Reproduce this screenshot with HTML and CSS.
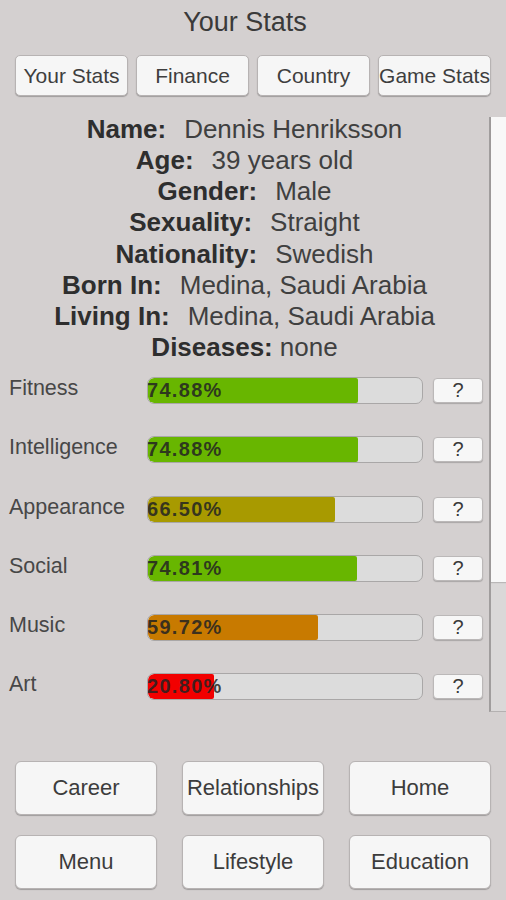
FILE: index.html
```html
<!DOCTYPE html>
<html>
<head>
<meta charset="utf-8">
<link rel="stylesheet" href="styles.css">
</head>
<body>
<div class="screen">
  <div class="title">Your Stats</div>
  <div class="tabs">
    <div class="tab">Your Stats</div>
    <div class="tab">Finance</div>
    <div class="tab">Country</div>
    <div class="tab">Game Stats</div>
  </div>
  <div class="panel">
    <div class="content">
      <div class="info">
        <div class="line"><b>Name:</b><span class="val">Dennis Henriksson</span></div>
        <div class="line"><b>Age:</b><span class="val">39 years old</span></div>
        <div class="line"><b>Gender:</b><span class="val">Male</span></div>
        <div class="line"><b>Sexuality:</b><span class="val">Straight</span></div>
        <div class="line"><b>Nationality:</b><span class="val">Swedish</span></div>
        <div class="line"><b>Born In:</b><span class="val">Medina, Saudi Arabia</span></div>
        <div class="line"><b>Living In:</b><span class="val">Medina, Saudi Arabia</span></div>
        <div class="line"><b>Diseases:</b><span class="val short">none</span></div>
      </div>
      <div class="stats">
        <div class="row">
          <div class="label">Fitness</div>
          <div class="bar"><div class="fill green" style="width:210px"></div><div class="pct">74.88%</div></div>
          <div class="q">?</div>
        </div>
        <div class="row">
          <div class="label">Intelligence</div>
          <div class="bar"><div class="fill green" style="width:210px"></div><div class="pct">74.88%</div></div>
          <div class="q">?</div>
        </div>
        <div class="row">
          <div class="label">Appearance</div>
          <div class="bar"><div class="fill olive" style="width:187px"></div><div class="pct">66.50%</div></div>
          <div class="q">?</div>
        </div>
        <div class="row">
          <div class="label">Social</div>
          <div class="bar"><div class="fill green" style="width:209px"></div><div class="pct">74.81%</div></div>
          <div class="q">?</div>
        </div>
        <div class="row">
          <div class="label">Music</div>
          <div class="bar"><div class="fill orange" style="width:170px"></div><div class="pct">59.72%</div></div>
          <div class="q">?</div>
        </div>
        <div class="row">
          <div class="label">Art</div>
          <div class="bar"><div class="fill red" style="width:66px"></div><div class="pct">20.80%</div></div>
          <div class="q">?</div>
        </div>
      </div>
    </div>
    <div class="scrollbar"><div class="thumb"></div></div>
  </div>
  <div class="actions">
    <div class="btn">Career</div>
    <div class="btn">Relationships</div>
    <div class="btn">Home</div>
    <div class="btn">Menu</div>
    <div class="btn">Lifestyle</div>
    <div class="btn">Education</div>
  </div>
</div>
</body>
</html>
```
FILE: styles.css
```css
html, body {
  margin: 0;
  padding: 0;
  background: #d4d0d0;
}
body {
  font-family: "Liberation Sans", Arial, sans-serif;
  color: #353535;
}
.screen {
  width: 506px;
  height: 900px;
  overflow: hidden;
}
.title {
  height: 44px;
  line-height: 44px;
  font-size: 27px;
  text-align: center;
  padding-right: 16px;
  color: #3a3a3a;
}
.tabs {
  display: grid;
  grid-template-columns: repeat(4, 113px);
  column-gap: 8px;
  margin: 11px 0 0 15px;
}
.tab {
  height: 39px;
  line-height: 39px;
  font-size: 21px;
  text-align: center;
  white-space: nowrap;
  overflow: hidden;
  background: #f6f6f6;
  border: 1px solid #b7b3b3;
  border-radius: 5px;
  box-shadow: 0 1px 1px rgba(0,0,0,0.25);
  color: #3e3e3e;
}
.panel {
  display: flex;
  margin-top: 17px;
  height: 599px;
}
.content {
  width: 489px;
}
.info {
  padding-top: 0.5px;
  text-align: center;
  font-size: 26px;
  line-height: 31.25px;
  padding-right: 0;
}
.line b {
  font-weight: bold;
  color: #2e2e2e;
}
.val {
  margin-left: 18px;
  color: #404040;
}
.val.short {
  margin-left: 7px;
}
.stats {
  margin-top: 13.5px;
  display: flex;
  flex-direction: column;
  gap: 32.3px;
}
.row {
  display: flex;
  align-items: flex-start;
  height: 27px;
}
.label {
  width: 138px;
  padding-left: 9px;
  font-size: 21.5px;
  line-height: 22px;
  color: #474747;
}
.bar {
  width: 274px;
  height: 25px;
  display: grid;
  background: #dcdcdc;
  border: 1px solid #a9a7a7;
  border-radius: 7px;
  overflow: hidden;
}
.fill, .pct {
  grid-area: 1 / 1;
}
.fill {
  height: 25px;
  border-radius: 6px 2px 2px 6px;
}
.green { background: #68b600; }
.olive { background: #a89a00; }
.orange { background: #c87a00; }
.red { background: #f20000; }
.pct {
  font-size: 20px;
  font-weight: bold;
  letter-spacing: 1.3px;
  line-height: 25px;
  color: rgba(35,35,35,0.85);
  margin-left: -1px;
}
.q {
  margin: 1px 0 0 10px;
  width: 48px;
  height: 23px;
  line-height: 23px;
  text-align: center;
  font-size: 20px;
  background: #f7f7f7;
  border: 1px solid #bbb8b8;
  border-radius: 4px;
  box-shadow: 0 1px 1px rgba(0,0,0,0.2);
  color: #3a3a3a;
}
.scrollbar {
  width: 15px;
  margin-top: 4px;
  height: 594px;
  background: #dad8d8;
  border-left: 2px solid #a09d9d;
  border-bottom: 1px solid #b4b1b1;
}
.thumb {
  height: 465px;
  background: #f8f8f8;
  box-shadow: 0 1px 1px rgba(0,0,0,0.15);
}
.actions {
  display: grid;
  grid-template-columns: repeat(3, 142px);
  grid-auto-rows: 54px;
  column-gap: 25px;
  row-gap: 20px;
  margin: 49px 0 0 15px;
}
.btn {
  display: flex;
  align-items: center;
  justify-content: center;
  font-size: 22px;
  white-space: nowrap;
  background: #f6f6f6;
  border: 1px solid #b7b3b3;
  border-radius: 6px;
  box-shadow: 0 1px 1px rgba(0,0,0,0.25);
  color: #3c3c3c;
}
```
